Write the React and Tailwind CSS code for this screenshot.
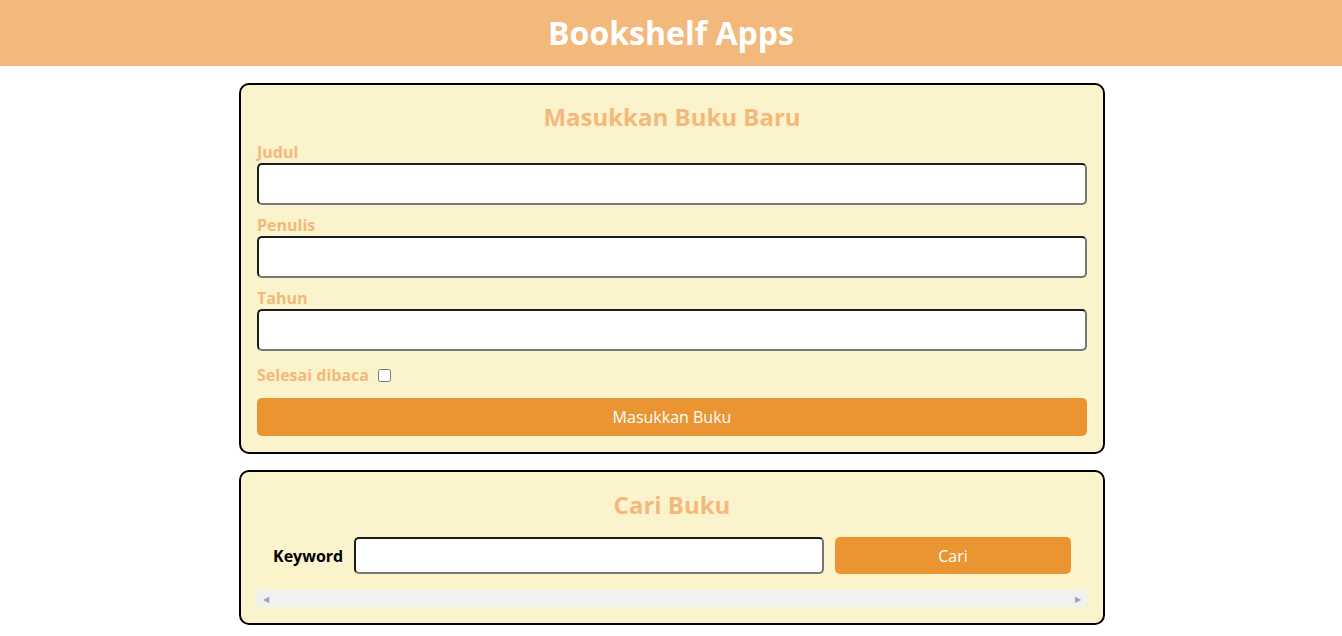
export default function App() {
  const font = { fontFamily: '"Open Sans", "Noto Sans", sans-serif' };
  const inputCls =
    "block w-full h-[42px] rounded-[5px] border-2 border-t-[#1c1c1c] border-l-[#1c1c1c] border-b-[#767676] border-r-[#767676] bg-white px-2 outline-none";

  return (
    <div className="min-h-[636px] bg-white" style={font}>
      <header className="flex h-[66px] items-center justify-center bg-[#f3b97c]">
        <h1 className="text-[32px] font-bold leading-none text-white">Bookshelf Apps</h1>
      </header>

      <section className="ml-[239px] mt-[17px] w-[866px] rounded-[10px] border-2 border-black bg-[#fbf3cb] p-4">
        <h2 className="text-center text-[24px] font-bold leading-[32px] text-[#f3b97c]">
          Masukkan Buku Baru
        </h2>
        <form className="mt-2" onSubmit={(e) => e.preventDefault()}>
          <div>
            <label className="block text-base font-bold leading-[22px] text-[#f3b97c]">Judul</label>
            <input type="text" className={inputCls} />
          </div>
          <div className="mt-[9px]">
            <label className="block text-base font-bold leading-[22px] text-[#f3b97c]">Penulis</label>
            <input type="text" className={inputCls} />
          </div>
          <div className="mt-[9px]">
            <label className="block text-base font-bold leading-[22px] text-[#f3b97c]">Tahun</label>
            <input type="number" className={inputCls} />
          </div>
          <div className="mt-[13px] flex h-[22px] items-center gap-[9px]">
            <label className="text-base font-bold text-[#f3b97c]">Selesai dibaca</label>
            <input type="checkbox" className="h-[13px] w-[13px]" />
          </div>
          <button
            type="submit"
            className="mt-3 block h-[38px] w-full rounded-[5px] bg-[#ea9532] text-base text-white"
          >
            Masukkan Buku
          </button>
        </form>
      </section>

      <section className="ml-[239px] mt-4 w-[866px] rounded-[10px] border-2 border-black bg-[#fbf3cb] px-4 pt-[17px] pb-4">
        <h2 className="text-center text-[24px] font-bold leading-[32px] text-[#f3b97c]">
          Cari Buku
        </h2>
        <form onSubmit={(e) => e.preventDefault()}>
          <div className="flex items-center gap-[11px] p-4">
            <label className="text-base font-bold text-black">Keyword</label>
            <input
              type="text"
              className="h-[37px] flex-1 rounded-[5px] border-2 border-t-[#1c1c1c] border-l-[#1c1c1c] border-b-[#767676] border-r-[#767676] bg-white px-2 outline-none"
            />
            <button type="submit" className="h-[37px] w-[236px] rounded-[5px] bg-[#ea9532] text-base text-white">
              Cari
            </button>
          </div>
          <div className="flex h-[17px] items-center justify-between bg-[#f1f1f1] px-[6px] text-[8px] leading-none text-[#a3a3a3]">
            <span>◀</span>
            <span>▶</span>
          </div>
        </form>
      </section>
    </div>
  );
}
